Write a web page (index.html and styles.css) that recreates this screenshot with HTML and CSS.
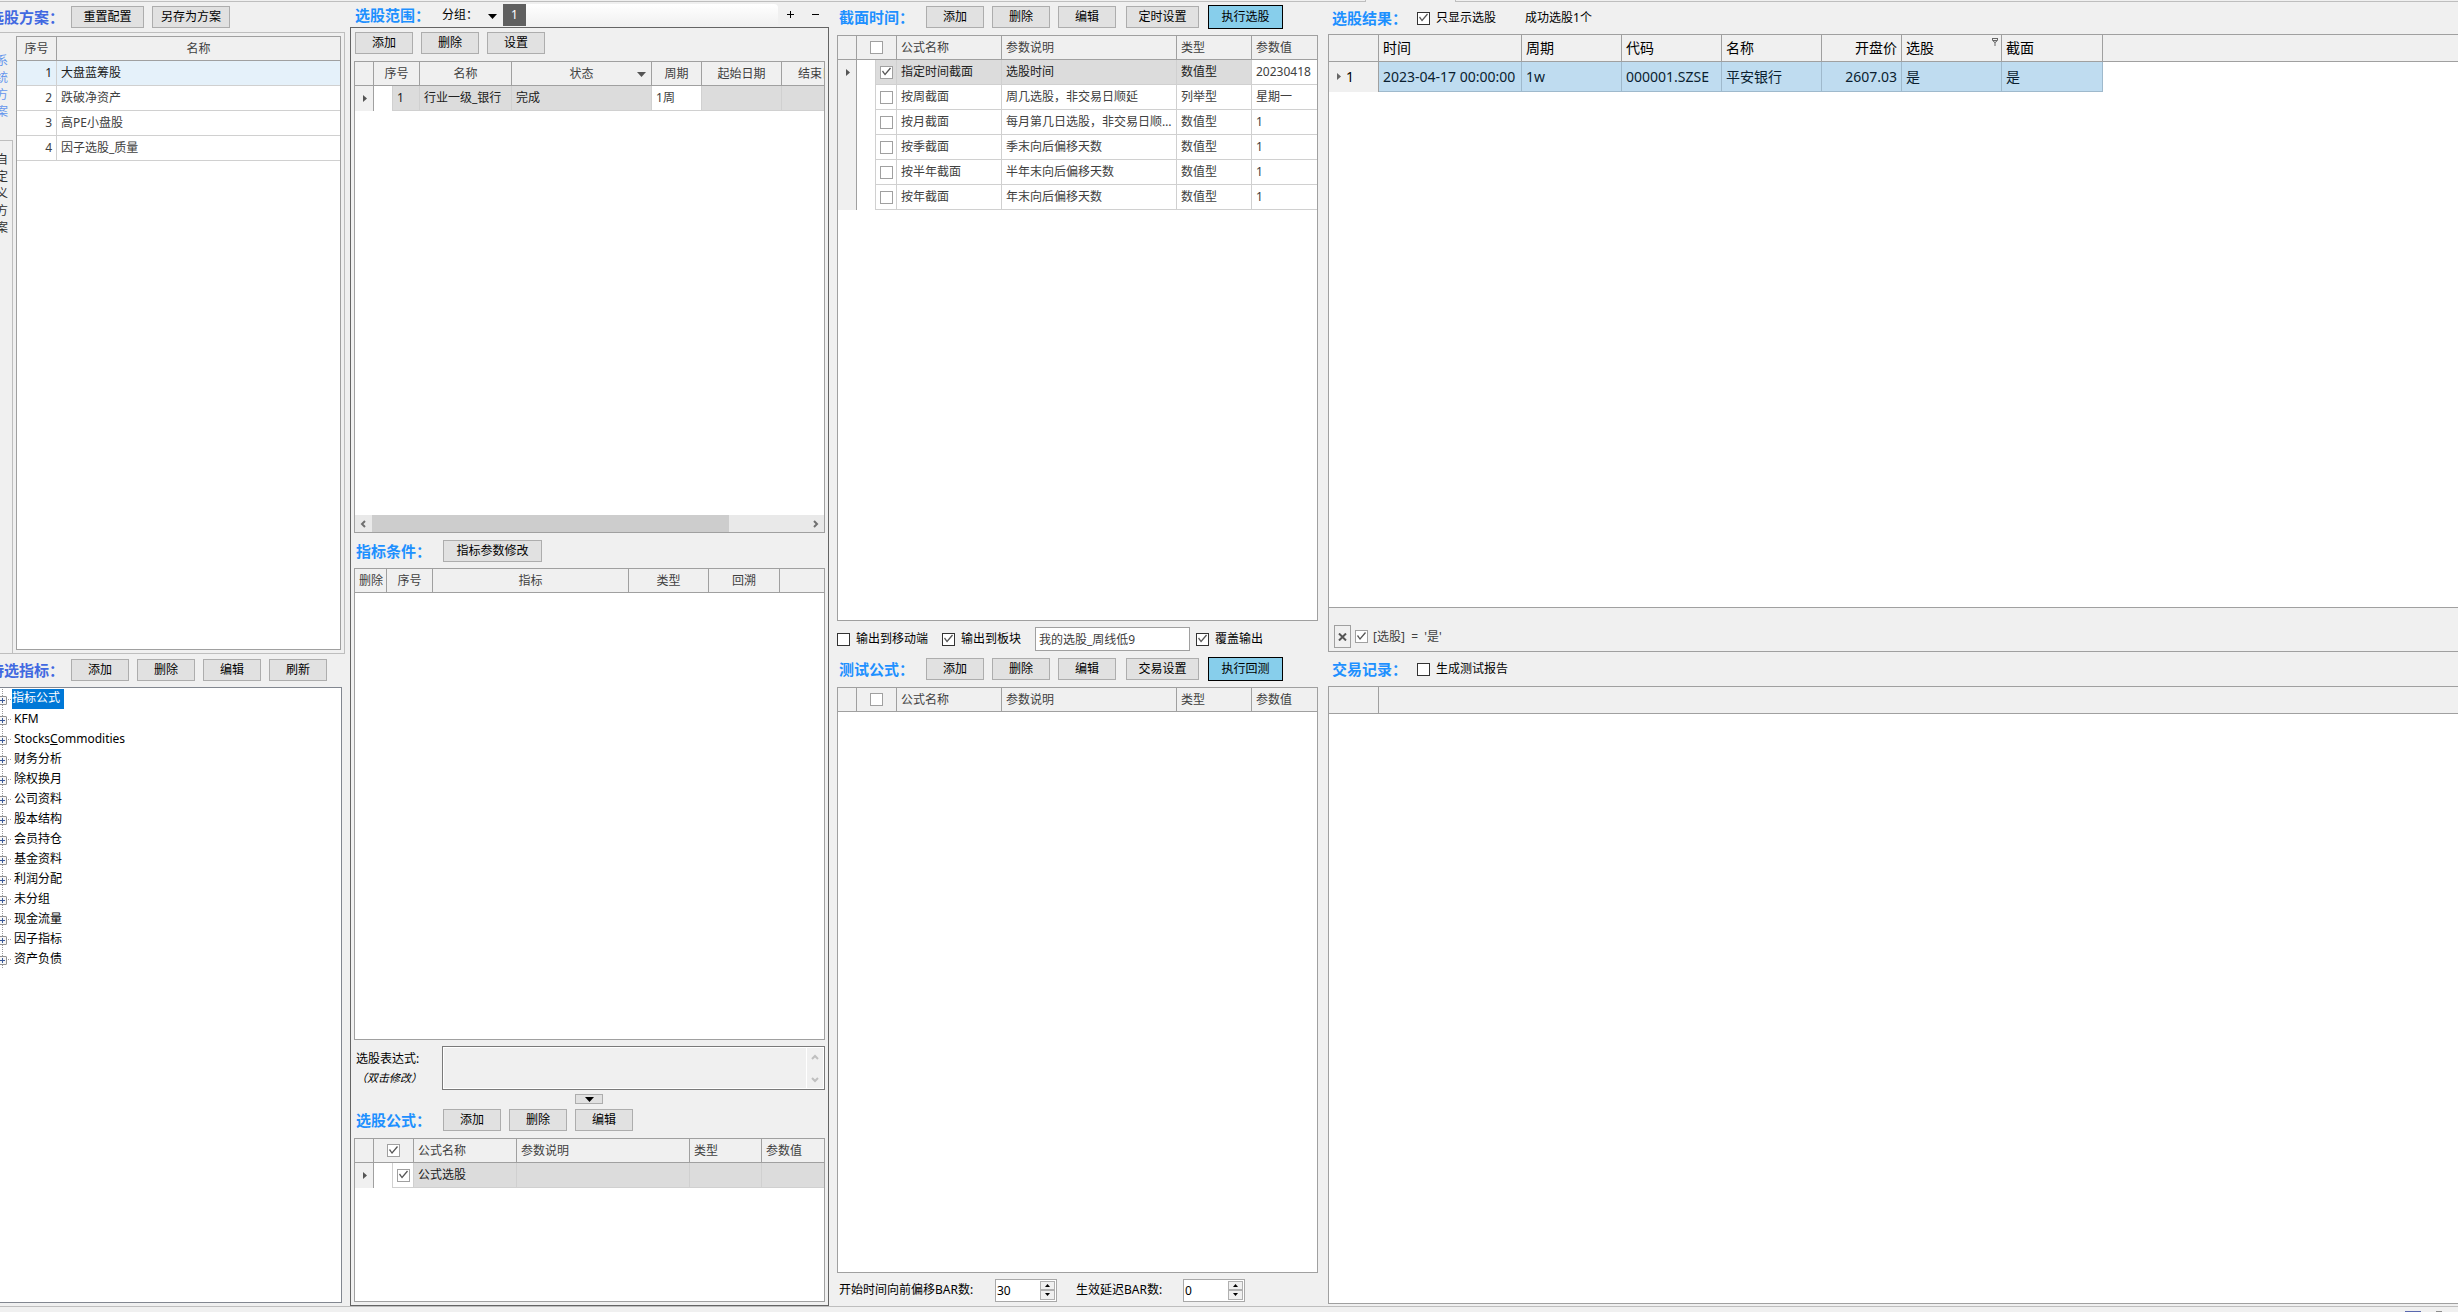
FILE: index.html
```html
<!DOCTYPE html>
<html lang="zh-CN">
<head>
<meta charset="utf-8">
<title>选股</title>
<link rel="stylesheet" href="styles.css">
</head>
<body>
<svg class="defs" aria-hidden="true">
  <symbol id="tri-right" viewBox="0 0 4 7"><path d="M0 0L4 3.500L0 7Z" fill="currentColor"/></symbol>
  <symbol id="tri-down" viewBox="0 0 9 5"><path d="M0 0H9L4.500 5Z" fill="currentColor"/></symbol>
  <symbol id="tri-up" viewBox="0 0 5 3"><path d="M0 3H5L2.500 0Z" fill="currentColor"/></symbol>
  <symbol id="chev-left" viewBox="0 0 6 8"><path d="M5 1L2 4L5 7" fill="none" stroke="currentColor" stroke-width="2"/></symbol>
  <symbol id="chev-right" viewBox="0 0 6 8"><path d="M1 1L4 4L1 7" fill="none" stroke="currentColor" stroke-width="2"/></symbol>
  <symbol id="chev-up" viewBox="0 0 8 6"><path d="M1 5L4 2L7 5" fill="none" stroke="currentColor" stroke-width="2"/></symbol>
  <symbol id="chev-down" viewBox="0 0 8 6"><path d="M1 1L4 4L7 1" fill="none" stroke="currentColor" stroke-width="2"/></symbol>
</svg>

<div class="tabstrip"><span class="strip-left"></span><span class="strip-tab"></span><span class="strip-right"></span></div>

<main class="workspace">
  <section class="col schemes">
    <div class="toolbar bar-schemes">
      <h2>选股方案：</h2>
      <button class="btn wide">重置配置</button>
      <button class="btn wider">另存为方案</button>
    </div>
    <div class="scheme-pane">
      <div class="side-tabs">
        <button class="side-tab active">系统方案</button>
        <button class="side-tab">自定义方案</button>
      </div>
      <div class="grid">
        <table>
          <colgroup><col class="w40"><col></colgroup>
          <thead><tr><th class="center">序号</th><th class="center">名称</th></tr></thead>
          <tbody>
            <tr class="hot"><td class="num">1</td><td>大盘蓝筹股</td></tr>
            <tr><td class="num">2</td><td>跌破净资产</td></tr>
            <tr><td class="num">3</td><td>高PE小盘股</td></tr>
            <tr><td class="num">4</td><td>因子选股_质量</td></tr>
          </tbody>
        </table>
      </div>
    </div>
    <div class="toolbar bar-tree">
      <h2>待选指标：</h2>
      <button class="btn">添加</button>
      <button class="btn">删除</button>
      <button class="btn">编辑</button>
      <button class="btn">刷新</button>
    </div>
    <ul class="tree">
      <li><button class="expander" aria-label="展开"></button><span class="picked">指标公式</span></li>
      <li><button class="expander" aria-label="展开"></button><span>KFM</span></li>
      <li><button class="expander" aria-label="展开"></button><span>Stocks<u>C</u>ommodities</span></li>
      <li><button class="expander" aria-label="展开"></button><span>财务分析</span></li>
      <li><button class="expander" aria-label="展开"></button><span>除权换月</span></li>
      <li><button class="expander" aria-label="展开"></button><span>公司资料</span></li>
      <li><button class="expander" aria-label="展开"></button><span>股本结构</span></li>
      <li><button class="expander" aria-label="展开"></button><span>会员持仓</span></li>
      <li><button class="expander" aria-label="展开"></button><span>基金资料</span></li>
      <li><button class="expander" aria-label="展开"></button><span>利润分配</span></li>
      <li><button class="expander" aria-label="展开"></button><span>未分组</span></li>
      <li><button class="expander" aria-label="展开"></button><span>现金流量</span></li>
      <li><button class="expander" aria-label="展开"></button><span>因子指标</span></li>
      <li><button class="expander" aria-label="展开"></button><span>资产负债</span></li>
    </ul>
  </section>

  <section class="col scope">
    <div class="group-bar">
      <h2>选股范围：</h2>
      <span class="group-label">分组：</span>
      <button class="flat drop" aria-label="选择分组"><svg width="9" height="5"><use href="#tri-down"/></svg></button>
      <button class="group-tab">1</button>
      <span class="group-fill"></span>
      <button class="flat sign" aria-label="增加分组"><svg width="7" height="7"><path d="M0 3.500H7M3.500 0V7" stroke="#000" stroke-width="1"/></svg></button>
      <button class="flat sign" aria-label="减少分组"><svg width="7" height="7"><path d="M0 3.500H7" stroke="#000" stroke-width="1"/></svg></button>
    </div>
    <div class="frame">
      <div class="toolbar bar-scope">
        <button class="btn">添加</button>
        <button class="btn">删除</button>
        <button class="btn">设置</button>
      </div>
      <div class="grid">
        <table class="t-scope">
          <colgroup><col class="w19"><col class="w19"><col class="w27"><col class="w92"><col class="w140"><col class="w50"><col class="w80"><col class="w80"></colgroup>
          <thead><tr><th></th><th class="center" colspan="2">序号</th><th class="center">名称</th><th class="center sorted">状态<svg width="9" height="5"><use href="#tri-down"/></svg></th><th class="center">周期</th><th class="center">起始日期</th><th class="center">结束日期</th></tr></thead>
          <tbody><tr class="sel"><td class="mark"><svg width="4" height="7"><use href="#tri-right"/></svg></td><td class="gap"></td><td>1</td><td>行业一级_银行</td><td>完成</td><td class="edit">1周</td><td></td><td></td></tr></tbody>
        </table>
        <div class="hscroll"><svg width="6" height="8"><use href="#chev-left"/></svg><span class="track"><span class="thumb"></span></span><svg width="6" height="8"><use href="#chev-right"/></svg></div>
      </div>
      <div class="toolbar bar-cond">
        <h2>指标条件：</h2>
        <button class="btn widest">指标参数修改</button>
      </div>
      <div class="grid">
        <table>
          <colgroup><col class="w32"><col class="w46"><col class="w196"><col class="w80"><col class="w71"><col></colgroup>
          <thead><tr><th class="tight">删除</th><th class="center">序号</th><th class="center">指标</th><th class="center">类型</th><th class="center">回溯</th><th></th></tr></thead>
        </table>
      </div>
      <div class="expr">
        <label for="expr">选股表达式:<em>（双击修改）</em></label>
        <div class="expr-box">
          <textarea id="expr" readonly></textarea>
          <span class="vscroll"><svg width="8" height="6"><use href="#chev-up"/></svg><svg width="8" height="6"><use href="#chev-down"/></svg></span>
        </div>
      </div>
      <button class="btn fold" aria-label="折叠"><svg width="9" height="5"><use href="#tri-down"/></svg></button>
      <div class="toolbar bar-formula">
        <h2>选股公式：</h2>
        <button class="btn">添加</button>
        <button class="btn">删除</button>
        <button class="btn">编辑</button>
      </div>
      <div class="grid short">
        <table>
          <colgroup><col class="w19"><col class="w19"><col class="w21"><col class="w103"><col class="w173"><col class="w72"><col></colgroup>
          <thead><tr><th></th><th class="center" colspan="2"><input type="checkbox" checked aria-label="全选"></th><th>公式名称</th><th>参数说明</th><th>类型</th><th>参数值</th></tr></thead>
          <tbody><tr class="sel"><td class="mark"><svg width="4" height="7"><use href="#tri-right"/></svg></td><td class="gap"></td><td class="tick edit"><input type="checkbox" checked aria-label="公式选股"></td><td>公式选股</td><td></td><td></td><td></td></tr></tbody>
        </table>
      </div>
    </div>
  </section>

  <section class="col timing">
    <div class="toolbar bar-time">
      <h2>截面时间：</h2>
      <button class="btn">添加</button>
      <button class="btn">删除</button>
      <button class="btn">编辑</button>
      <button class="btn wide">定时设置</button>
      <button class="btn primary">执行选股</button>
    </div>
    <div class="grid">
      <table>
        <colgroup><col class="w19"><col class="w19"><col class="w21"><col class="w105"><col class="w175"><col class="w75"><col></colgroup>
        <thead><tr><th></th><th class="center" colspan="2"><input type="checkbox" aria-label="全选"></th><th>公式名称</th><th>参数说明</th><th>类型</th><th>参数值</th></tr></thead>
        <tbody>
          <tr class="sel"><td class="mark"><svg width="4" height="7"><use href="#tri-right"/></svg></td><td class="gap"></td><td class="tick"><input type="checkbox" checked aria-label="指定时间截面"></td><td>指定时间截面</td><td>选股时间</td><td>数值型</td><td class="edit">20230418</td></tr>
          <tr><td class="mark"></td><td class="gap"></td><td class="tick"><input type="checkbox" aria-label="按周截面"></td><td>按周截面</td><td>周几选股，非交易日顺延</td><td>列举型</td><td>星期一</td></tr>
          <tr><td class="mark"></td><td class="gap"></td><td class="tick"><input type="checkbox" aria-label="按月截面"></td><td>按月截面</td><td>每月第几日选股，非交易日顺延</td><td>数值型</td><td>1</td></tr>
          <tr><td class="mark"></td><td class="gap"></td><td class="tick"><input type="checkbox" aria-label="按季截面"></td><td>按季截面</td><td>季末向后偏移天数</td><td>数值型</td><td>1</td></tr>
          <tr><td class="mark"></td><td class="gap"></td><td class="tick"><input type="checkbox" aria-label="按半年截面"></td><td>按半年截面</td><td>半年末向后偏移天数</td><td>数值型</td><td>1</td></tr>
          <tr><td class="mark"></td><td class="gap"></td><td class="tick"><input type="checkbox" aria-label="按年截面"></td><td>按年截面</td><td>年末向后偏移天数</td><td>数值型</td><td>1</td></tr>
        </tbody>
      </table>
    </div>
    <div class="options">
      <label class="opt"><input type="checkbox">输出到移动端</label>
      <label class="opt opt-board"><input type="checkbox" checked>输出到板块</label>
      <input class="board-name" type="text" value="我的选股_周线低9" aria-label="板块名称">
      <label class="opt"><input type="checkbox" checked>覆盖输出</label>
    </div>
    <div class="toolbar bar-test">
      <h2>测试公式：</h2>
      <button class="btn">添加</button>
      <button class="btn">删除</button>
      <button class="btn">编辑</button>
      <button class="btn wide">交易设置</button>
      <button class="btn primary">执行回测</button>
    </div>
    <div class="grid">
      <table>
        <colgroup><col class="w19"><col class="w19"><col class="w21"><col class="w105"><col class="w175"><col class="w75"><col></colgroup>
        <thead><tr><th></th><th class="center" colspan="2"><input type="checkbox" aria-label="全选"></th><th>公式名称</th><th>参数说明</th><th>类型</th><th>参数值</th></tr></thead>
      </table>
    </div>
    <div class="offsets">
      <label class="offset-label" for="bars">开始时间向前偏移BAR数:</label>
      <span class="spin"><input id="bars" type="text" value="30"><span class="spin-btns"><button aria-label="增加"><svg width="5" height="3"><use href="#tri-up"/></svg></button><button aria-label="减少"><svg class="down" width="5" height="3"><use href="#tri-up"/></svg></button></span></span>
      <label class="delay-label" for="delay">生效延迟BAR数:</label>
      <span class="spin"><input id="delay" type="text" value="0"><span class="spin-btns"><button aria-label="增加"><svg width="5" height="3"><use href="#tri-up"/></svg></button><button aria-label="减少"><svg class="down" width="5" height="3"><use href="#tri-up"/></svg></button></span></span>
    </div>
  </section>

  <section class="col results">
    <div class="toolbar bar-result">
      <h2>选股结果：</h2>
      <label class="opt opt-only"><input type="checkbox" checked>只显示选股</label>
      <span>成功选股1个</span>
    </div>
    <div class="grid big">
      <table>
        <colgroup><col class="w50"><col class="w143"><col class="w100"><col class="w100"><col class="w100"><col class="w80"><col class="w100"><col class="w101"><col></colgroup>
        <thead><tr><th></th><th>时间</th><th>周期</th><th>代码</th><th>名称</th><th class="num">开盘价</th><th class="filtered">选股<svg width="6" height="8" viewBox="0 0 6 8"><path d="M0 0.500H6M0.500 1V2.500L3 4.500L5.500 2.500V1M1 2.500H5M3 4V8" fill="none" stroke="#666"/></svg></th><th>截面</th><th></th></tr></thead>
        <tbody><tr><td class="mark"><svg width="4" height="7"><use href="#tri-right"/></svg>1</td><td>2023-04-17 00:00:00</td><td>1w</td><td>000001.SZSE</td><td>平安银行</td><td class="num">2607.03</td><td>是</td><td>是</td><td class="rest"></td></tr></tbody>
      </table>
      <div class="filter-bar">
        <button class="clear" aria-label="清除筛选"><svg width="9" height="8"><path d="M1 0.500L8 7.500M8 0.500L1 7.500" stroke="#555" stroke-width="2"/></svg></button>
        <label><input type="checkbox" checked>[选股]&nbsp; =&nbsp; '是'</label>
      </div>
    </div>
    <div class="toolbar bar-trades">
      <h2>交易记录：</h2>
      <label class="opt"><input type="checkbox">生成测试报告</label>
    </div>
    <div class="grid big">
      <table>
        <colgroup><col class="w50"><col></colgroup>
        <thead><tr><th></th><th></th></tr></thead>
      </table>
    </div>
  </section>
</main>

<footer class="status"><span class="status-mark"></span><span class="status-dot"></span></footer>
</body>
</html>
```
FILE: styles.css
```css
* { box-sizing: border-box; }

body {
  margin: 0;
  height: 100vh;
  display: flex;
  flex-direction: column;
  overflow: hidden;
  background: #f0f0f0;
  color: #000;
  font: 12px/16px "Noto Sans", "Noto Sans CJK SC", sans-serif;
}

button, input, textarea { font: inherit; color: inherit; margin: 0; padding: 0; }
svg { display: block; flex: none; }
.defs { display: none; }

/* window edges */
.tabstrip { display: flex; height: 2px; }
.strip-left { width: 1366px; border: solid #bebebe; border-width: 0 1px 1px 0; }
.strip-tab { width: 89px; }
.strip-right { flex: 1; border: solid #bebebe; border-width: 0 0 1px 1px; }

.status {
  display: flex;
  justify-content: flex-end;
  align-items: flex-end;
  gap: 15px;
  height: 6px;
  padding-right: 16px;
  border-top: 1px solid #bebebe;
}
.status-mark { width: 16px; height: 1px; background: #5a68ae; }
.status-dot { width: 6px; height: 1px; background: #8c8c8c; }

.workspace {
  flex: 1;
  min-height: 0;
  display: grid;
  grid-template-columns: 350px 487px 491px 1fr;
}
.col { display: flex; flex-direction: column; min-width: 0; min-height: 0; }
.schemes { padding: 0 5px 3px 0; overflow: hidden; }
.scope { padding-right: 8px; }
.timing { padding-right: 10px; }
.results { padding-bottom: 2px; }

/* toolbars */
h2 {
  margin: 0;
  flex: none;
  width: 87px;
  font-size: 15px;
  line-height: 20px;
  font-weight: 700;
  font-family: "Noto Sans CJK SC", sans-serif;
  color: #1e90ff;
  white-space: nowrap;
}
.schemes h2 { width: 82px; margin-left: -11px; color: #4169e1; }
.results h2 { width: 85px; }
.toolbar { display: flex; align-items: center; flex: none; }
.btn {
  flex: none;
  width: 58px;
  height: 22px;
  margin-right: 8px;
  border: 1px solid #adadad;
  background: #e1e1e1;
  line-height: 18px;
  text-align: center;
  white-space: nowrap;
}
.btn.wide { width: 73px; }
.btn.wider { width: 78px; }
.btn.widest { width: 99px; }
.timing .btn.wide { margin-left: 2px; }
.btn.primary {
  width: 75px;
  height: 24px;
  margin: 0 0 0 1px;
  border-color: #000;
  background: #87ceeb;
}
.bar-schemes { height: 30px; }
.bar-tree { height: 33px; padding-bottom: 2px; }
.bar-scope { height: 33px; padding: 0 0 3px 1px; }
.bar-cond { height: 35px; padding-left: 2px; }
.bar-formula { height: 34px; padding: 0 0 2px 2px; }
.bar-time { height: 33px; padding: 3px 0 6px 2px; }
.bar-test { height: 30px; padding: 0 0 6px 2px; }
.bar-result { height: 32px; padding-left: 4px; }
.bar-trades { height: 34px; padding-left: 4px; }

/* data grids */
.grid {
  flex: 1 1 0;
  min-height: 0;
  min-width: 0;
  display: flex;
  flex-direction: column;
  overflow: hidden;
  border: 1px solid #a0a0a0;
  background: #fff;
  color: #404040;
}
.grid.short { flex: 0 0 164px; }
table { width: 100%; table-layout: fixed; border-collapse: separate; border-spacing: 0; flex: none; }
.t-scope { width: 507px; }
th, td {
  height: 25px;
  padding: 0 4px;
  border: solid #d0d0d0;
  border-width: 0 1px 1px 0;
  font-weight: 400;
  line-height: 16px;
  text-align: left;
  white-space: nowrap;
  overflow: hidden;
  text-overflow: ellipsis;
}
th { height: 24px; background: #f0f0f0; border-color: #a0a0a0; text-overflow: clip; }
th:last-child, td:last-child { border-right-width: 0; }
.center { text-align: center; }
.tight { padding: 0 4px; }
.num { text-align: right; }
th input, td input { display: block; }
.center input { margin: 0 auto; }
td.tick { padding: 0 0 0 4px; text-overflow: clip; }
td.mark {
  padding: 0;
  background: #f0f0f0;
  border-color: #a0a0a0;
  border-bottom-width: 0;
  color: #555;
}
td.mark svg { margin-left: 8px; }
td.gap { padding: 0; background: #fff; border-bottom-width: 0; }
tr.hot td { background: #e5f1fa; color: #202020; }
tr.sel td { background: #dcdcdc; color: #202020; }
tr.sel td.mark { background: #f0f0f0; color: #555; }
tr.sel td.gap, tr.sel td.edit { background: #fff; color: #404040; }
.sorted { position: relative; }
.sorted svg { position: absolute; right: 5px; top: 10px; color: #555; }
.filtered { position: relative; }
.filtered svg { position: absolute; right: 3px; top: 3px; }

.w19 { width: 19px; } .w21 { width: 21px; } .w27 { width: 27px; } .w32 { width: 32px; }
.w40 { width: 40px; } .w46 { width: 46px; } .w50 { width: 50px; } .w71 { width: 71px; }
.w72 { width: 72px; } .w75 { width: 75px; } .w80 { width: 80px; } .w92 { width: 92px; }
.w100 { width: 100px; } .w101 { width: 101px; } .w103 { width: 103px; } .w105 { width: 105px; }
.w140 { width: 140px; } .w143 { width: 143px; } .w173 { width: 173px; } .w175 { width: 175px; }
.w196 { width: 196px; }

.big { border-right: 0; }
.big table { font-size: 14px; color: #000; }
.big th { height: 27px; }
.big td { height: 30px; background: #bfdcf0; border-color: #9fb9cc; color: #0a1e30; text-overflow: clip; }
.big td.mark { background: #f0f0f0; border-color: #a0a0a0; color: #000; }
.big td.mark svg { display: inline-block; margin: 0 5px 2px 8px; color: #666; }
.big td.rest { background: #fff; border: 0; }

/* tick boxes */
input[type="checkbox"] {
  appearance: none;
  flex: none;
  width: 13px;
  height: 13px;
  border: 1px solid #a0a0a0;
  background: #fff;
}
input[type="checkbox"]:checked::before {
  content: "";
  display: block;
  width: 11px;
  height: 11px;
  background: #555;
  clip-path: polygon(1px 5px, 2px 4px, 4px 7px, 9px 1px, 10px 2px, 4px 9px);
}
.opt { display: flex; align-items: center; gap: 6px; white-space: nowrap; }
.opt input[type="checkbox"] { border-color: #333; }
.opt-only { margin-right: 29px; }

/* scheme list */
.scheme-pane {
  flex: 1 1 9px;
  min-height: 0;
  display: flex;
  border: solid #bebebe;
  border-width: 1px 1px 1px 0;
}
.scheme-pane .grid { margin: 3px 3px 3px 4px; }
.side-tabs { flex: none; width: 12px; display: flex; flex-direction: column; }
.side-tab {
  flex: 1;
  display: flex;
  align-items: flex-start;
  width: 16px;
  margin-left: -4px;
  padding: 10px 4px 0 0;
  border: 0;
  border-top: 1px solid #bebebe;
  background: none;
  line-height: 17px;
  text-align: left;
  color: #303030;
  word-break: break-all;
}
.side-tab:not(.active) { width: 17px; padding-right: 4px; border-right: 1px solid #bebebe; }
.side-tab.active { flex: 0 0 107px; padding-top: 19px; border-top: 0; color: #6495ed; }

/* indicator tree */
.tree {
  flex: 1 1 0;
  min-height: 0;
  margin: 0 3px 0 0;
  padding: 1px 0 0;
  list-style: none;
  border: solid #828790;
  border-width: 1px 1px 1px 0;
  background: #fff;
}
.tree li {
  display: flex;
  align-items: center;
  height: 20px;
  background:
    repeating-linear-gradient(to right, #999 0 1px, transparent 1px 2px) 8px 10px / 4px 1px no-repeat,
    repeating-linear-gradient(to bottom, #999 0 1px, transparent 1px 2px) 2px 0 / 1px 20px no-repeat;
}
.expander {
  flex: none;
  width: 9px;
  height: 9px;
  margin: 2px 5px 0 -2px;
  border: 1px solid #919191;
  border-radius: 1px;
  background:
    linear-gradient(#3b5998, #3b5998) center / 5px 1px no-repeat,
    linear-gradient(#3b5998, #3b5998) center / 1px 5px no-repeat,
    #f6f6f6;
}
.tree span { padding: 0 2px; line-height: 18px; }
.tree .picked { height: 20px; padding: 0 4px 0 0; background: #0078d7; color: #fff; }

/* scope header */
.group-bar { display: flex; align-items: center; flex: none; height: 25px; padding: 0 1px 0 5px; }
.group-label { flex: none; width: 41px; white-space: nowrap; }
.flat { flex: none; border: 0; background: none; display: flex; align-items: center; justify-content: center; height: 20px; }
.drop { width: 18px; }
.drop svg { margin-top: 4px; }
.group-tab { flex: none; width: 23px; height: 22px; margin-left: 2px; border: 0; background: #5f5f5f; color: #fff; }
.group-fill { flex: 1; height: 22px; border-radius: 0 4px 0 0; background: linear-gradient(#fff, #f0f0f0); }
.sign { width: 25px; }

.frame {
  flex: 1;
  min-height: 0;
  display: flex;
  flex-direction: column;
  padding: 0 3px 3px;
  border: 1px solid #646464;
}
.hscroll {
  display: flex;
  align-items: center;
  height: 17px;
  margin-top: auto;
  padding: 0 5px;
  gap: 6px;
  background: #e9e9e9;
  color: #707070;
  flex: none;
}
.track { flex: 1; height: 17px; }
.thumb { display: block; width: 82%; height: 17px; background: #cdcdcd; }

.expr { flex: none; display: flex; height: 44px; margin-top: 6px; }
.expr label { width: 88px; padding: 5px 0 0 2px; white-space: nowrap; }
.expr em { display: block; margin-top: 3px; font-size: 11px; }
.expr-box { flex: 1; display: flex; border: 1px solid #7a7a7a; padding: 1px; background: #fff; }
.expr textarea { flex: 1; min-width: 0; border: 0; resize: none; background: #f0f0f0; outline: 0; }
.vscroll {
  width: 16px;
  margin-left: 1px;
  display: flex;
  flex-direction: column;
  justify-content: space-between;
  align-items: center;
  padding: 6px 0 5px;
  background: #f0f0f0;
  color: #bfbfbf;
}
.fold {
  width: 28px;
  height: 10px;
  margin: 4px auto 0 221px;
  display: flex;
  align-items: center;
  justify-content: center;
}

/* output options */
.options { display: flex; align-items: center; flex: none; height: 36px; }
.opt-board { margin: 0 14px; }
.board-name {
  width: 155px;
  height: 24px;
  margin-right: 6px;
  padding: 0 3px;
  border: 1px solid #a0a0a0;
  background: #fff;
  color: #404040;
}

.offsets { display: flex; align-items: center; flex: none; height: 33px; padding: 1px 0 0 2px; }
.offset-label { width: 156px; white-space: nowrap; }
.delay-label { width: 107px; margin-left: 19px; white-space: nowrap; }
.spin { display: flex; width: 62px; height: 23px; padding: 1px; border: 1px solid #a8a8a8; background: #fff; }
.spin input { flex: 1; min-width: 0; border: 0; outline: 0; line-height: 19px; }
.spin-btns { display: flex; flex-direction: column; width: 15px; }
.spin-btns button {
  flex: 1;
  display: flex;
  align-items: center;
  justify-content: center;
  border: 1px solid #b0b0b0;
  background: #f0f0f0;
}
.spin-btns .down { transform: rotate(180deg); }

.filter-bar {
  display: flex;
  align-items: center;
  gap: 4px;
  flex: none;
  height: 44px;
  margin-top: auto;
  padding: 14px 0 0 5px;
  border-top: 1px solid #a0a0a0;
  background: #f0f0f0;
}
.clear {
  width: 17px;
  height: 23px;
  display: flex;
  align-items: center;
  justify-content: center;
  border: 1px solid #a0a0a0;
  background: #f0f0f0;
}
.filter-bar label { display: flex; align-items: center; gap: 5px; }
```
